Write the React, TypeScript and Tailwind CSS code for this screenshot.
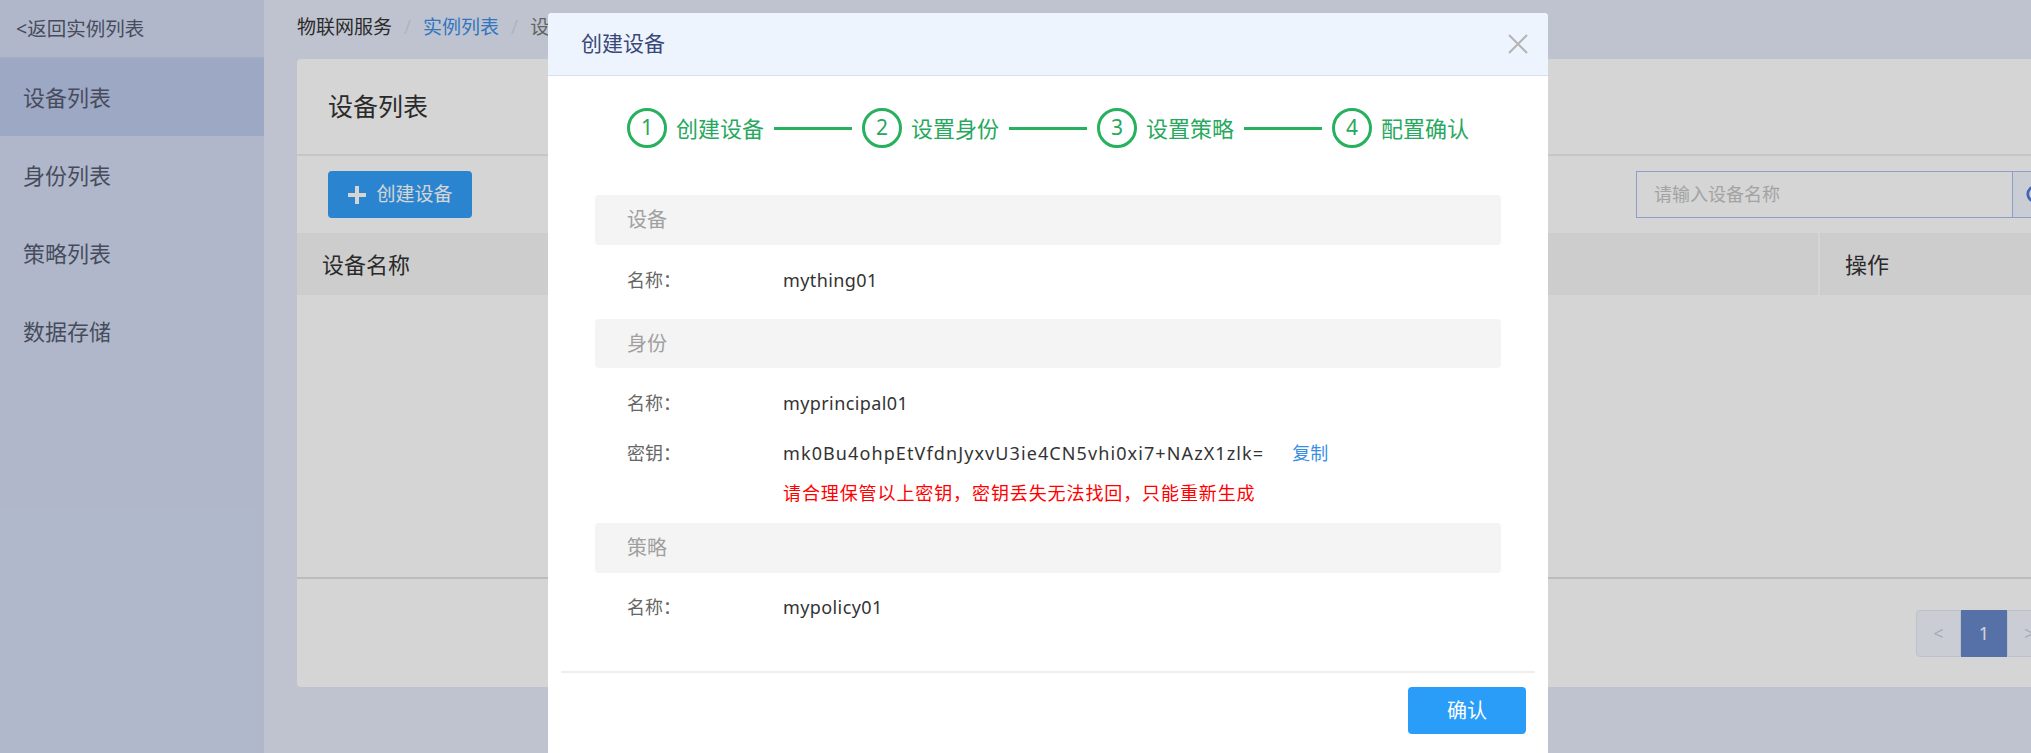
import React from 'react';
import { Search } from 'lucide-react';

// -----------------------------------------------------------------------------
// DATA
// -----------------------------------------------------------------------------

const SIDE_MENU = ['设备列表', '身份列表', '策略列表', '数据存储'];
const STEPS = ['创建设备', '设置身份', '设置策略', '配置确认'];
const SECRET = 'mk0Bu4ohpEtVfdnJyxvU3ie4CN5vhi0xi7+NAzX1zlk=';

// -----------------------------------------------------------------------------
// PAGE UNDER THE DIALOG
// -----------------------------------------------------------------------------

const Sidebar = () => (
    <aside className="w-[264px] shrink-0 bg-[#d3dcf4]">
        <div className="flex h-[58px] items-center border-b border-[#c6d0ee] pl-[16px] text-[19.5px] text-[#555c70]">
            &lt;返回实例列表
        </div>
        {SIDE_MENU.map((item, idx) => (
            <div
                key={item}
                className={`flex h-[78px] items-center pl-[23px] text-[22px] text-[#555c70] ${idx === 0 ? 'bg-[#bdc9eb]' : ''}`}
            >
                {item}
            </div>
        ))}
    </aside>
);

const DeviceListCard = () => (
    <div className="rounded-[4px] bg-white">
        {/* Header */}
        <div className="flex h-[97px] items-center border-b-2 border-[#eeeeee] pl-[31px] text-[25px] text-[#333]">
            设备列表
        </div>

        {/* Toolbar */}
        <div className="flex h-[77px] items-center justify-between px-[31px]">
            <button className="flex h-[47px] w-[144px] items-center justify-center gap-[9px] rounded-[4px] bg-[#339ffa] text-[19px] text-white">
                <svg width="20" height="20" viewBox="0 0 20 20">
                    <path d="M10 1v18M1 10h18" stroke="white" strokeWidth="4" />
                </svg>
                创建设备
            </button>
            <div className="flex">
                <div className="flex h-[47px] w-[377px] items-center border border-[#abbef4] bg-white pl-[17px] text-[18px] text-[#c4c4c4]">
                    请输入设备名称
                </div>
                <div className="flex h-[47px] w-[47px] items-center justify-center border border-l-0 border-[#abbef4] bg-[#f3f6ff]">
                    <Search size={22} strokeWidth={3} className="text-[#4d79d8]" />
                </div>
            </div>
        </div>

        {/* Table */}
        <div className="flex h-[62px] bg-[#f6f6f6] text-[22px] text-[#333]">
            <div className="flex flex-1 items-center pl-[25px]">设备名称</div>
            <div className="flex w-[273px] items-center border-l-2 border-white pl-[25px]">操作</div>
        </div>
        <div className="h-[284px] border-b-2 border-[#e2e2e2]" />

        {/* Pagination */}
        <div className="flex h-[108px] items-center justify-end pr-[39px] text-[18px]">
            <div className="flex h-[47px] w-[45px] items-center justify-center rounded-l-[4px] border border-[#e3e8f7] bg-[#f3f6ff] text-[#c8cdda]">
                &lt;
            </div>
            <div className="flex h-[47px] w-[46px] items-center justify-center bg-[#6786c9] text-white">1</div>
            <div className="flex h-[47px] w-[45px] items-center justify-center rounded-r-[4px] border border-[#e3e8f7] bg-[#f3f6ff] text-[#c8cdda]">
                &gt;
            </div>
        </div>
    </div>
);

// -----------------------------------------------------------------------------
// DIALOG
// -----------------------------------------------------------------------------

const Steps = () => (
    <div className="flex h-[40px] items-center justify-center">
        {STEPS.map((step, idx) => (
            <React.Fragment key={step}>
                {idx > 0 && <div className="mx-[10px] h-[3px] w-[78px] bg-[#27b05e]" />}
                <div className="flex h-[40px] w-[40px] items-center justify-center rounded-full border-[3px] border-[#27b05e] text-[21px] text-[#27a85e]">
                    {idx + 1}
                </div>
                <span className="ml-[9px] text-[22px] text-[#27a85e]">{step}</span>
            </React.Fragment>
        ))}
    </div>
);

const SectionTitle = ({ children, className = 'h-[50px]' }: { children: React.ReactNode; className?: string }) => (
    <div className={`flex items-center rounded-[4px] bg-[#f4f4f4] pl-[32px] text-[20px] text-[#a0a0a0] ${className}`}>
        {children}
    </div>
);

const Row = ({ label, children, className }: { label: string; children: React.ReactNode; className: string }) => (
    <div className={`flex items-center pl-[32px] text-[18px] ${className}`}>
        <span className="w-[156px] shrink-0 text-[#666]">{label}</span>
        <div className="flex items-center tracking-[0.4px] text-[#333]">{children}</div>
    </div>
);

const CreateDeviceDialog = () => (
    <div className="absolute left-[548px] top-[13px] h-[760px] w-[1000px] rounded-t-[4px] bg-white">
        <div className="flex h-[63px] items-center justify-between rounded-t-[4px] border-b border-[#d6dff2] bg-[#eef4fd] pl-[33px] pr-[20px]">
            <span className="text-[21px] text-[#394878]">创建设备</span>
            <svg width="20" height="20" viewBox="0 0 20 20">
                <path d="M1 1l18 18M19 1L1 19" stroke="#b4b4b4" strokeWidth="2" />
            </svg>
        </div>

        <div className="px-[47px] pt-[32px]">
            <Steps />

            <div className="mt-[47px]">
                <SectionTitle>设备</SectionTitle>
                <Row label="名称：" className="h-[70px]">mything01</Row>

                <SectionTitle className="mt-[4px] h-[49px]">身份</SectionTitle>
                <Row label="名称：" className="h-[70px]">myprincipal01</Row>
                <Row label="密钥：" className="h-[30px]">
                    <span className="tracking-[1.1px]">{SECRET}</span>
                    <span className="ml-[28px] tracking-normal text-[#3a8ee6]">复制</span>
                </Row>
                <div className="mt-[10px] flex h-[30px] items-center pl-[188px] text-[18px] tracking-[0.9px] text-[#ff0000]">
                    请合理保管以上密钥，密钥丢失无法找回，只能重新生成
                </div>

                <SectionTitle className="mt-[15px] h-[50px]">策略</SectionTitle>
                <Row label="名称：" className="h-[68px]">mypolicy01</Row>
            </div>
        </div>

        <div className="mx-[13px] mt-[30px] border-t-2 border-[#eeeeee]" />
        <div className="flex justify-end pr-[22px] pt-[14px]">
            <button className="flex h-[47px] w-[118px] items-center justify-center rounded-[4px] bg-[#299df8] text-[20px] text-white">
                确认
            </button>
        </div>
    </div>
);

// -----------------------------------------------------------------------------
// APP
// -----------------------------------------------------------------------------

export default function App() {
    return (
        <div className="relative h-[753px] w-full overflow-hidden font-['Noto_Sans','Noto_Sans_CJK_SC',sans-serif]">
            <div className="flex h-full w-[2124px]">
                <Sidebar />
                <main className="flex-1 bg-[#e5eaf8] pl-[31px] pr-[33px]">
                    <div className="flex h-[59px] items-center pb-[5px] pl-[2px] text-[19px]">
                        <span className="text-[#333]">物联网服务</span>
                        <span className="mx-[12px] text-[#d3d8e6]">/</span>
                        <span className="text-[#3a8ee6]">实例列表</span>
                        <span className="mx-[12px] text-[#d3d8e6]">/</span>
                        <span className="text-[#777]">设备列表</span>
                    </div>
                    <div className="pl-[2px]">
                        <DeviceListCard />
                    </div>
                </main>
            </div>

            {/* Dim layer */}
            <div className="absolute inset-0 bg-[rgba(0,0,0,0.165)]" />

            <CreateDeviceDialog />
        </div>
    );
}
